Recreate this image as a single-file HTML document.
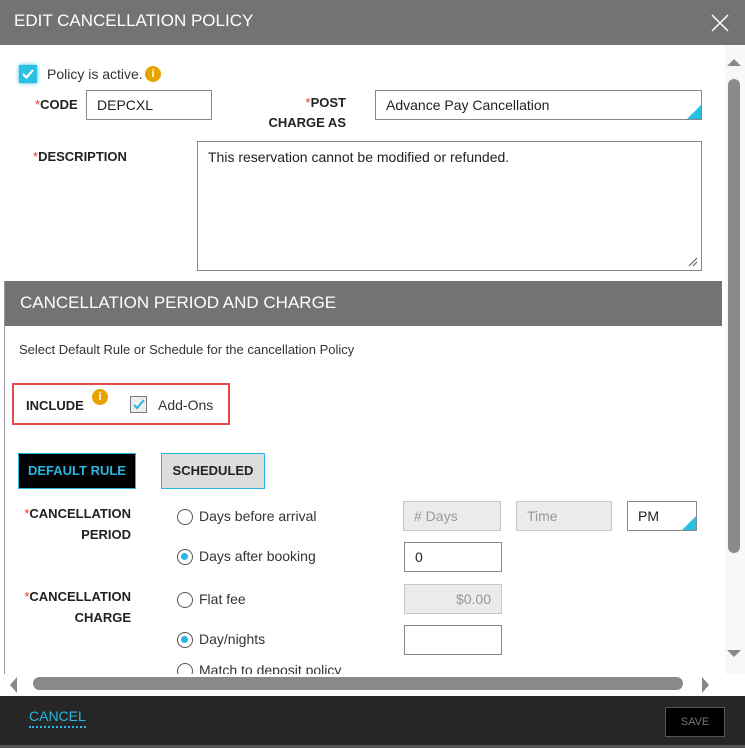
<!DOCTYPE html>
<html><head><style>
*{box-sizing:border-box;margin:0;padding:0}
body{width:745px;height:748px;overflow:hidden;background:#fff;font-family:"Liberation Sans",sans-serif;color:#222;position:relative;font-size:14px}
.a{position:absolute}
.hdr{left:0;top:0;width:745px;height:45px;background:#737373;color:#fff;font-size:17px;padding:11px 14px}
.lbl{font-weight:bold;font-size:13px;color:#222;white-space:nowrap}
.req{color:#e32;font-weight:normal}
.box{border:1px solid #888;background:#fff;font-size:14px;padding:0 10px;display:flex;align-items:center}
.dis{background:#ebebeb;border-color:#c8c8c8;color:#999}
.tri{position:absolute;right:0;bottom:0;width:0;height:0;border-left:14px solid transparent;border-bottom:14px solid #29c0e6}
.radio{width:16px;height:16px;border:1.5px solid #555;border-radius:50%;background:#fff}
.radio.on::after{content:"";position:absolute;left:3px;top:3px;width:7px;height:7px;border-radius:50%;background:#29b6e0}
.info{width:16px;height:16px;border-radius:50%;background:#e8a300;color:#fff;font-size:11px;font-weight:bold;text-align:center;line-height:16px}
.rt{font-size:14px;color:#333;white-space:nowrap}
</style></head><body>
<div class="a hdr">EDIT CANCELLATION POLICY</div>
<svg class="a" style="left:711px;top:14px" width="18" height="18"><path d="M1 1L17 17M17 1L1 17" stroke="#fff" stroke-width="1.5"/></svg>

<div class="a" style="left:19px;top:65px;width:18px;height:18px;background:#29c0e6;box-shadow:0 0 4px #29c0e6"><svg width="18" height="18"><path d="M4 9l3.5 3.5L14 5" stroke="#fff" stroke-width="2.2" fill="none"/></svg></div>
<div class="a rt" style="left:47px;top:66px">Policy is active.</div>
<div class="a info" style="left:145px;top:66px">i</div>

<div class="a lbl" style="left:35px;top:97px"><span class="req">*</span>CODE</div>
<div class="a box" style="left:86px;top:90px;width:126px;height:30px">DEPCXL</div>
<div class="a lbl" style="left:246px;top:93px;width:100px;text-align:right;line-height:20px"><span class="req">*</span>POST<br>CHARGE AS</div>
<div class="a box" style="left:375px;top:90px;width:327px;height:30px">Advance Pay Cancellation<div class="tri"></div></div>

<div class="a lbl" style="left:33px;top:149px"><span class="req">*</span>DESCRIPTION</div>
<div class="a box" style="left:197px;top:141px;width:505px;height:130px;align-items:flex-start;padding-top:7px">This reservation cannot be modified or refunded.</div>
<svg class="a" style="left:688px;top:257px" width="10" height="10"><path d="M1 9L9 1M5 9L9 5" stroke="#555"/></svg>

<div class="a" style="left:4px;top:281px;width:1px;height:395px;background:#999"></div>
<div class="a" style="left:5px;top:281px;width:717px;height:45px;background:#737373;color:#fff;font-size:17px;padding:12px 15px">CANCELLATION PERIOD AND CHARGE</div>
<div class="a rt" style="left:19px;top:342px;font-size:13px">Select Default Rule or Schedule for the cancellation Policy</div>

<div class="a" style="left:12px;top:383px;width:218px;height:42px;border:2px solid #e24a47"></div>
<div class="a lbl" style="left:26px;top:398px">INCLUDE</div>
<div class="a info" style="left:92px;top:389px">i</div>
<div class="a" style="left:130px;top:396px;width:17px;height:17px;border:1px solid #777;background:#eee"><svg width="15" height="15"><path d="M3 8l3 3L13 3" stroke="#29b6e0" stroke-width="2" fill="none"/></svg></div>
<div class="a rt" style="left:158px;top:397px">Add-Ons</div>

<div class="a" style="left:18px;top:453px;width:118px;height:36px;background:#000;border:1px solid #29b6e0;color:#29b6e0;font-weight:bold;font-size:13px;text-align:center;line-height:34px">DEFAULT RULE</div>
<div class="a" style="left:161px;top:453px;width:104px;height:36px;background:#ddd;border:1px solid #29b6e0;color:#222;font-weight:bold;font-size:13px;text-align:center;line-height:34px">SCHEDULED</div>

<div class="a lbl" style="left:10px;top:503px;width:121px;text-align:right;line-height:21px"><span class="req">*</span>CANCELLATION<br>PERIOD</div>
<div class="a radio" style="left:177px;top:509px"></div><div class="a rt" style="left:199px;top:508px">Days before arrival</div>
<div class="a box dis" style="left:403px;top:501px;width:98px;height:30px">#&nbsp;Days</div>
<div class="a box dis" style="left:516px;top:501px;width:96px;height:30px">Time</div>
<div class="a box" style="left:627px;top:501px;width:70px;height:30px">PM<div class="tri"></div></div>
<div class="a radio on" style="left:177px;top:549px"></div><div class="a rt" style="left:199px;top:548px">Days after booking</div>
<div class="a box" style="left:404px;top:542px;width:98px;height:30px">0</div>

<div class="a lbl" style="left:10px;top:586px;width:121px;text-align:right;line-height:21px"><span class="req">*</span>CANCELLATION<br>CHARGE</div>
<div class="a radio" style="left:177px;top:592px"></div><div class="a rt" style="left:199px;top:591px">Flat fee</div>
<div class="a box dis" style="left:404px;top:584px;width:98px;height:30px;justify-content:flex-end">$0.00</div>
<div class="a radio on" style="left:177px;top:632px"></div><div class="a rt" style="left:199px;top:631px">Day/nights</div>
<div class="a box" style="left:404px;top:625px;width:98px;height:30px"></div>
<div class="a" style="left:0;top:662px;width:725px;height:12px;overflow:hidden"><div class="a radio" style="left:177px;top:1px"></div><div class="a rt" style="left:199px;top:0px">Match to deposit policy</div></div>

<div class="a" style="left:725px;top:45px;width:20px;height:631px;background:#f8f8f8"></div>
<svg class="a" style="left:727px;top:58px" width="14" height="10"><path d="M0 8L7 1L14 8Z" fill="#888"/></svg>
<div class="a" style="left:728px;top:79px;width:12px;height:474px;background:#8a8a8a;border-radius:6px"></div>
<svg class="a" style="left:727px;top:649px" width="14" height="10"><path d="M0 1L7 8L14 1Z" fill="#888"/></svg>
<div class="a" style="left:0;top:674px;width:745px;height:22px;background:#fff"></div>
<svg class="a" style="left:10px;top:677px" width="8" height="16"><path d="M7 0L0 8L7 16Z" fill="#888"/></svg>
<div class="a" style="left:33px;top:677px;width:650px;height:13px;background:#8a8a8a;border-radius:7px"></div>
<svg class="a" style="left:702px;top:677px" width="8" height="16"><path d="M0 0L7 8L0 16Z" fill="#888"/></svg>

<div class="a" style="left:0;top:696px;width:745px;height:52px;background:#262626"></div>
<div class="a" style="left:0;top:745px;width:745px;height:3px;background:#555"></div>
<div class="a" style="left:29px;top:708px;color:#29b6e0;font-size:14px;border-bottom:2px dotted #29b6e0;padding-bottom:2px">CANCEL</div>
<div class="a" style="left:665px;top:707px;width:60px;height:30px;background:#000;border:1px solid #555;color:#777;font-size:11px;text-align:center;line-height:28px">SAVE</div>
</body></html>
